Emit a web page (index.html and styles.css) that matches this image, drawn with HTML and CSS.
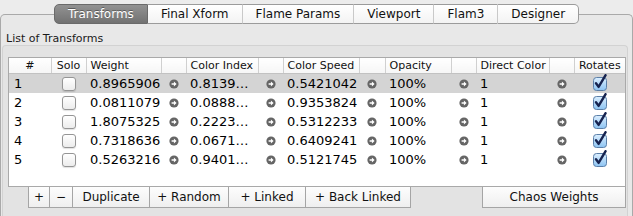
FILE: index.html
```html
<!DOCTYPE html>
<html>
<head>
<meta charset="utf-8">
<link rel="stylesheet" href="styles.css">
</head>
<body>
<div class="tabwidget">
  <div class="tabs">
    <div class="tab active">Transforms</div>
    <div class="tab">Final Xform</div>
    <div class="tab">Flame Params</div>
    <div class="tab">Viewport</div>
    <div class="tab">Flam3</div>
    <div class="tab last">Designer</div>
  </div>
  <div class="pane">
    <div class="group-title">List of Transforms</div>
    <div class="group">
      <div class="tablebox">
        <table class="grid">
          <colgroup>
            <col class="c-num"><col class="c-solo"><col class="c-w"><col class="c-arr">
            <col class="c-ci"><col class="c-arr"><col class="c-cs"><col class="c-arr2">
            <col class="c-op"><col class="c-arr"><col class="c-dc"><col class="c-arr"><col>
          </colgroup>
          <thead>
            <tr>
              <th class="center first">#</th>
              <th class="center">Solo</th>
              <th>Weight</th>
              <th></th>
              <th>Color Index</th>
              <th></th>
              <th>Color Speed</th>
              <th></th>
              <th>Opacity</th>
              <th></th>
              <th>Direct Color</th>
              <th></th>
              <th class="center">Rotates</th>
            </tr>
          </thead>
          <tbody>
            <tr class="sel">
              <td>1</td><td class="center"><span class="cb"></span></td>
              <td>0.8965906</td><td class="center"><svg class="arr" viewBox="0 0 10 10"><circle cx="5" cy="5" r="4.6"/><path d="M2.6 4.2h2.3V2.6L7.6 5 4.9 7.4V5.8H2.6z"/></svg></td>
              <td>0.8139…</td><td class="center"><svg class="arr" viewBox="0 0 10 10"><circle cx="5" cy="5" r="4.6"/><path d="M2.6 4.2h2.3V2.6L7.6 5 4.9 7.4V5.8H2.6z"/></svg></td>
              <td>0.5421042</td><td class="center"><svg class="arr" viewBox="0 0 10 10"><circle cx="5" cy="5" r="4.6"/><path d="M2.6 4.2h2.3V2.6L7.6 5 4.9 7.4V5.8H2.6z"/></svg></td>
              <td>100%</td><td class="center"><svg class="arr" viewBox="0 0 10 10"><circle cx="5" cy="5" r="4.6"/><path d="M2.6 4.2h2.3V2.6L7.6 5 4.9 7.4V5.8H2.6z"/></svg></td>
              <td>1</td><td class="center"><svg class="arr" viewBox="0 0 10 10"><circle cx="5" cy="5" r="4.6"/><path d="M2.6 4.2h2.3V2.6L7.6 5 4.9 7.4V5.8H2.6z"/></svg></td>
              <td class="center"><svg class="chk" viewBox="0 0 16 17"><defs><linearGradient id="g" x1="0" y1="0" x2="0" y2="1"><stop offset="0" stop-color="#dcefff"/><stop offset="1" stop-color="#8cc3f2"/></linearGradient></defs><rect x="1.5" y="3.5" width="13" height="13" rx="3" fill="url(#g)" stroke="#5b7fa8"/><path d="M4 9.3l2.6 3.6L13.6 1.2" fill="none" stroke="#16234f" stroke-width="2.4" stroke-linecap="round" stroke-linejoin="round"/></svg></td>
            </tr>
            <tr>
              <td>2</td><td class="center"><span class="cb"></span></td>
              <td>0.0811079</td><td class="center"><svg class="arr" viewBox="0 0 10 10"><circle cx="5" cy="5" r="4.6"/><path d="M2.6 4.2h2.3V2.6L7.6 5 4.9 7.4V5.8H2.6z"/></svg></td>
              <td>0.0888…</td><td class="center"><svg class="arr" viewBox="0 0 10 10"><circle cx="5" cy="5" r="4.6"/><path d="M2.6 4.2h2.3V2.6L7.6 5 4.9 7.4V5.8H2.6z"/></svg></td>
              <td>0.9353824</td><td class="center"><svg class="arr" viewBox="0 0 10 10"><circle cx="5" cy="5" r="4.6"/><path d="M2.6 4.2h2.3V2.6L7.6 5 4.9 7.4V5.8H2.6z"/></svg></td>
              <td>100%</td><td class="center"><svg class="arr" viewBox="0 0 10 10"><circle cx="5" cy="5" r="4.6"/><path d="M2.6 4.2h2.3V2.6L7.6 5 4.9 7.4V5.8H2.6z"/></svg></td>
              <td>1</td><td class="center"><svg class="arr" viewBox="0 0 10 10"><circle cx="5" cy="5" r="4.6"/><path d="M2.6 4.2h2.3V2.6L7.6 5 4.9 7.4V5.8H2.6z"/></svg></td>
              <td class="center"><svg class="chk" viewBox="0 0 16 17"><rect x="1.5" y="3.5" width="13" height="13" rx="3" fill="url(#g)" stroke="#5b7fa8"/><path d="M4 9.3l2.6 3.6L13.6 1.2" fill="none" stroke="#16234f" stroke-width="2.4" stroke-linecap="round" stroke-linejoin="round"/></svg></td>
            </tr>
            <tr>
              <td>3</td><td class="center"><span class="cb"></span></td>
              <td>1.8075325</td><td class="center"><svg class="arr" viewBox="0 0 10 10"><circle cx="5" cy="5" r="4.6"/><path d="M2.6 4.2h2.3V2.6L7.6 5 4.9 7.4V5.8H2.6z"/></svg></td>
              <td>0.2223…</td><td class="center"><svg class="arr" viewBox="0 0 10 10"><circle cx="5" cy="5" r="4.6"/><path d="M2.6 4.2h2.3V2.6L7.6 5 4.9 7.4V5.8H2.6z"/></svg></td>
              <td>0.5312233</td><td class="center"><svg class="arr" viewBox="0 0 10 10"><circle cx="5" cy="5" r="4.6"/><path d="M2.6 4.2h2.3V2.6L7.6 5 4.9 7.4V5.8H2.6z"/></svg></td>
              <td>100%</td><td class="center"><svg class="arr" viewBox="0 0 10 10"><circle cx="5" cy="5" r="4.6"/><path d="M2.6 4.2h2.3V2.6L7.6 5 4.9 7.4V5.8H2.6z"/></svg></td>
              <td>1</td><td class="center"><svg class="arr" viewBox="0 0 10 10"><circle cx="5" cy="5" r="4.6"/><path d="M2.6 4.2h2.3V2.6L7.6 5 4.9 7.4V5.8H2.6z"/></svg></td>
              <td class="center"><svg class="chk" viewBox="0 0 16 17"><rect x="1.5" y="3.5" width="13" height="13" rx="3" fill="url(#g)" stroke="#5b7fa8"/><path d="M4 9.3l2.6 3.6L13.6 1.2" fill="none" stroke="#16234f" stroke-width="2.4" stroke-linecap="round" stroke-linejoin="round"/></svg></td>
            </tr>
            <tr>
              <td>4</td><td class="center"><span class="cb"></span></td>
              <td>0.7318636</td><td class="center"><svg class="arr" viewBox="0 0 10 10"><circle cx="5" cy="5" r="4.6"/><path d="M2.6 4.2h2.3V2.6L7.6 5 4.9 7.4V5.8H2.6z"/></svg></td>
              <td>0.0671…</td><td class="center"><svg class="arr" viewBox="0 0 10 10"><circle cx="5" cy="5" r="4.6"/><path d="M2.6 4.2h2.3V2.6L7.6 5 4.9 7.4V5.8H2.6z"/></svg></td>
              <td>0.6409241</td><td class="center"><svg class="arr" viewBox="0 0 10 10"><circle cx="5" cy="5" r="4.6"/><path d="M2.6 4.2h2.3V2.6L7.6 5 4.9 7.4V5.8H2.6z"/></svg></td>
              <td>100%</td><td class="center"><svg class="arr" viewBox="0 0 10 10"><circle cx="5" cy="5" r="4.6"/><path d="M2.6 4.2h2.3V2.6L7.6 5 4.9 7.4V5.8H2.6z"/></svg></td>
              <td>1</td><td class="center"><svg class="arr" viewBox="0 0 10 10"><circle cx="5" cy="5" r="4.6"/><path d="M2.6 4.2h2.3V2.6L7.6 5 4.9 7.4V5.8H2.6z"/></svg></td>
              <td class="center"><svg class="chk" viewBox="0 0 16 17"><rect x="1.5" y="3.5" width="13" height="13" rx="3" fill="url(#g)" stroke="#5b7fa8"/><path d="M4 9.3l2.6 3.6L13.6 1.2" fill="none" stroke="#16234f" stroke-width="2.4" stroke-linecap="round" stroke-linejoin="round"/></svg></td>
            </tr>
            <tr>
              <td>5</td><td class="center"><span class="cb"></span></td>
              <td>0.5263216</td><td class="center"><svg class="arr" viewBox="0 0 10 10"><circle cx="5" cy="5" r="4.6"/><path d="M2.6 4.2h2.3V2.6L7.6 5 4.9 7.4V5.8H2.6z"/></svg></td>
              <td>0.9401…</td><td class="center"><svg class="arr" viewBox="0 0 10 10"><circle cx="5" cy="5" r="4.6"/><path d="M2.6 4.2h2.3V2.6L7.6 5 4.9 7.4V5.8H2.6z"/></svg></td>
              <td>0.5121745</td><td class="center"><svg class="arr" viewBox="0 0 10 10"><circle cx="5" cy="5" r="4.6"/><path d="M2.6 4.2h2.3V2.6L7.6 5 4.9 7.4V5.8H2.6z"/></svg></td>
              <td>100%</td><td class="center"><svg class="arr" viewBox="0 0 10 10"><circle cx="5" cy="5" r="4.6"/><path d="M2.6 4.2h2.3V2.6L7.6 5 4.9 7.4V5.8H2.6z"/></svg></td>
              <td>1</td><td class="center"><svg class="arr" viewBox="0 0 10 10"><circle cx="5" cy="5" r="4.6"/><path d="M2.6 4.2h2.3V2.6L7.6 5 4.9 7.4V5.8H2.6z"/></svg></td>
              <td class="center"><svg class="chk" viewBox="0 0 16 17"><rect x="1.5" y="3.5" width="13" height="13" rx="3" fill="url(#g)" stroke="#5b7fa8"/><path d="M4 9.3l2.6 3.6L13.6 1.2" fill="none" stroke="#16234f" stroke-width="2.4" stroke-linecap="round" stroke-linejoin="round"/></svg></td>
            </tr>
          </tbody>
        </table>
      </div>
      <div class="buttons">
        <div class="btngroup">
          <button class="btn b-plus">+</button>
          <button class="btn b-minus">−</button>
          <button class="btn b-dup">Duplicate</button>
          <button class="btn b-rand">+ Random</button>
          <button class="btn b-link">+ Linked</button>
          <button class="btn b-back">+ Back Linked</button>
        </div>
        <button class="btn chaos">Chaos Weights</button>
      </div>
    </div>
  </div>
</div>
</body>
</html>
```

FILE: styles.css
```css
html, body {
  margin: 0;
  padding: 0;
}
body {
  width: 633px;
  height: 216px;
  overflow: hidden;
  background: #ececec;
  font-family: "DejaVu Sans", "Liberation Sans", sans-serif;
  color: #000;
}
.tabwidget {
  padding-top: 4px;
}
.tabs {
  position: relative;
  z-index: 1;
  display: flex;
  justify-content: center;
  height: 20px;
}
.tab {
  box-sizing: border-box;
  height: 20px;
  padding: 0 13px;
  font-size: 12px;
  line-height: 18px;
  background: linear-gradient(#ffffff, #f3f3f3);
  border-top: 1px solid #9b9b9b;
  border-bottom: 1px solid #9b9b9b;
  border-left: 1px solid #c9c9c9;
  color: #111;
}
.tab.active {
  background: linear-gradient(#929292, #727272);
  color: #fff;
  border: 1px solid #6a6a6a;
  border-radius: 5px 0 0 5px;
  text-shadow: 0 -1px 0 rgba(0,0,0,0.35);
}
.tab.active + .tab {
  border-left: none;
}
.tab.last {
  border-right: 1px solid #9b9b9b;
  border-radius: 0 5px 5px 0;
}
.pane {
  box-sizing: border-box;
  margin-top: -10px;
  padding-top: 17px;
  height: 202px;
  border: 1px solid #a9a9a9;
  border-bottom: none;
  border-radius: 5px 5px 0 0;
  background: #e8e8e8;
}
.group-title {
  padding-left: 5px;
  font-size: 11px;
  line-height: 13px;
  color: #1a1a1a;
}
.group {
  box-sizing: border-box;
  margin: 0 4px 0 1px;
  padding: 11px 1px 0 5px;
  height: 171px;
  border: 1px solid #d2d2d2;
  border-bottom: none;
  border-radius: 4px 4px 0 0;
  background: #e3e3e3;
}
.tablebox {
  height: 128px;
  border: 1px solid #a9a9a9;
  background: #fff;
}
.grid {
  width: 100%;
  table-layout: fixed;
  border-collapse: collapse;
}
.c-num { width: 42px; }
.c-solo { width: 35px; }
.c-w { width: 75px; }
.c-arr { width: 25px; }
.c-arr2 { width: 26px; }
.c-ci { width: 72px; }
.c-cs { width: 76px; }
.c-op { width: 66px; }
.c-dc { width: 73px; }
.grid th {
  height: 15px;
  padding: 0 0 0 4px;
  font-size: 11px;
  font-weight: normal;
  text-align: left;
  line-height: 14px;
  color: #111;
  background: linear-gradient(#ffffff, #f6f6f6);
  border-bottom: 1px solid #c2c2c2;
  border-left: 1px solid #d0d0d0;
  white-space: nowrap;
  overflow: hidden;
}
.grid th.first {
  border-left: none;
}
.grid th.center, .grid td.center {
  text-align: center;
  padding-left: 0;
}
.grid td {
  height: 19px;
  padding: 0 0 0 4px;
  font-size: 13px;
  line-height: 19px;
  white-space: nowrap;
  overflow: hidden;
  vertical-align: middle;
}
.grid td:first-child {
  padding-left: 5px;
}
.grid tr.sel td {
  background: #d4d4d4;
}
.arr {
  display: block;
  margin: 0 auto;
  width: 10px;
  height: 10px;
}
.arr circle {
  fill: #656565;
}
.arr path {
  fill: #fff;
}
.cb {
  display: block;
  box-sizing: border-box;
  width: 14px;
  height: 14px;
  margin: 0 auto;
  border: 1px solid #959595;
  border-radius: 3px;
  background: linear-gradient(#ffffff, #ececec);
  box-shadow: 0 1px 1px rgba(0,0,0,0.12);
}
.chk {
  display: block;
  width: 16px;
  height: 17px;
  margin: -3px auto 0;
}
.buttons {
  display: flex;
  justify-content: space-between;
}
.btngroup {
  display: flex;
  margin-left: 20px;
}
.btn {
  box-sizing: border-box;
  height: 21px;
  margin: 0;
  padding: 0;
  font-family: "DejaVu Sans", "Liberation Sans", sans-serif;
  font-size: 12px;
  line-height: 18px;
  color: #111;
  background: linear-gradient(#fdfdfd, #efefef);
  border: 1px solid #a5a5a5;
  border-top: none;
  border-radius: 0;
  white-space: nowrap;
}
.btngroup .btn + .btn {
  border-left: none;
}
.b-plus { width: 22px; }
.b-minus { width: 23px; }
.b-dup { width: 77px; }
.b-rand { width: 79px; }
.b-link { width: 77px; }
.b-back { width: 105px; }
.btn.chaos {
  width: 144px;
}
```
